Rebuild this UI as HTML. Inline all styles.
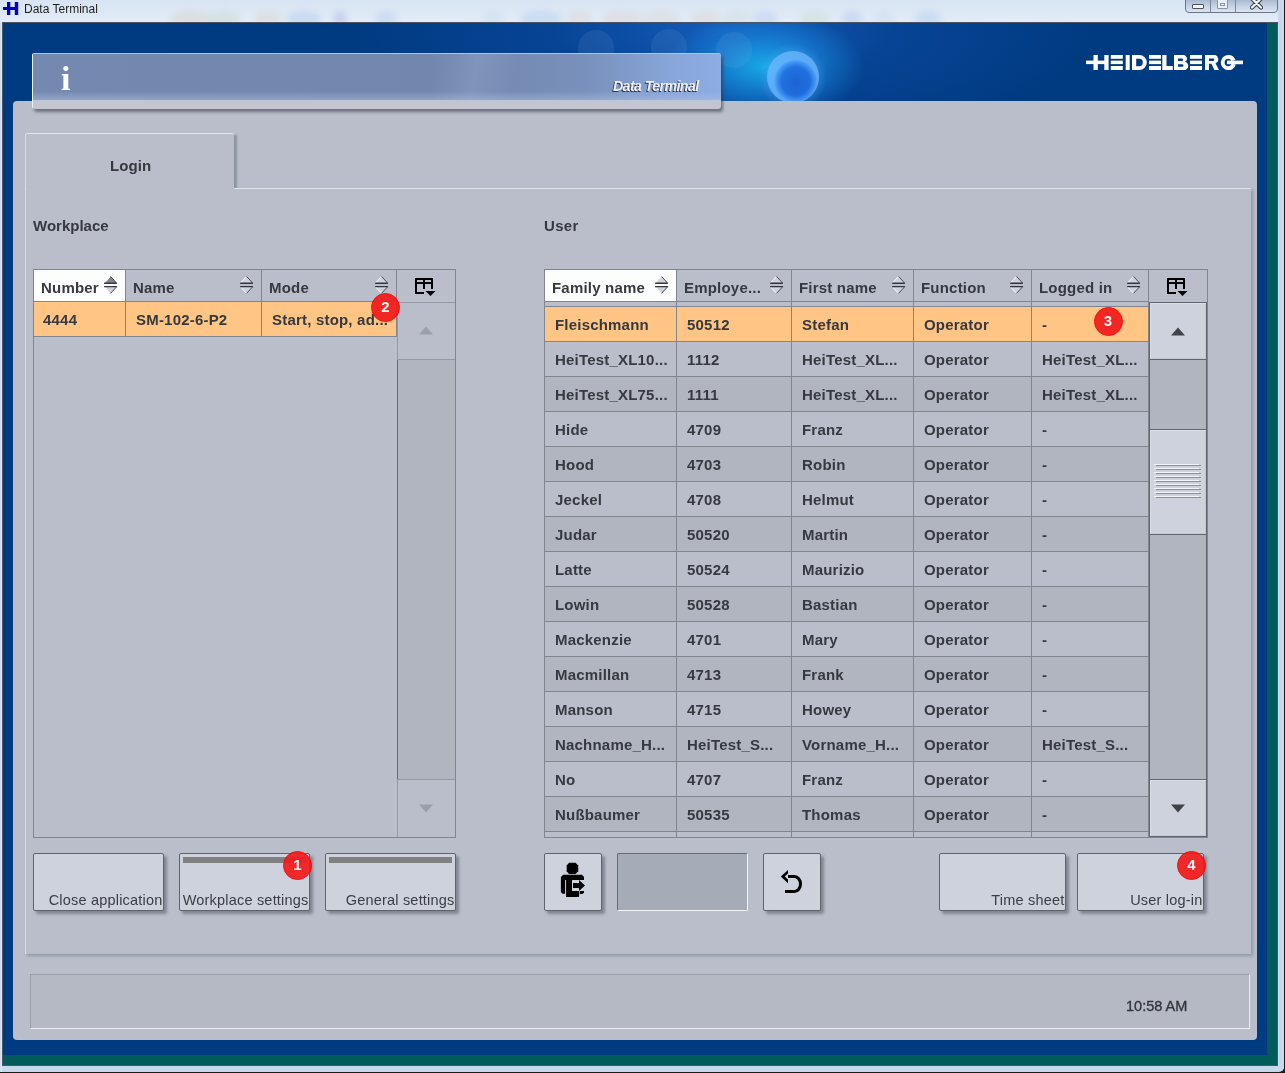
<!DOCTYPE html><html><head><meta charset="utf-8"><style>
*{margin:0;padding:0;box-sizing:border-box}
html,body{width:1285px;height:1073px;overflow:hidden}
body{position:relative;will-change:transform;background:#dde8f5;font-family:"Liberation Sans",sans-serif;color:#36393f}
.a{position:absolute}
.b{font-weight:bold}
.t{position:absolute;white-space:nowrap;font-weight:bold;font-size:15px;line-height:20px;letter-spacing:0.2px}
.hl{position:absolute;height:1px;background:#80858f}
.vl{position:absolute;width:1px;background:#80858f}
.badge{position:absolute;width:29px;height:29px;border-radius:50%;background:#f21c1c;border:1.5px solid #ff0000;opacity:.93;color:#fff;font-size:15px;font-weight:bold;text-align:center;line-height:26px}
.btn{position:absolute;background:#cdd2dc;border:1px solid #5f636b;border-radius:2px;box-shadow:3px 3px 3px rgba(60,65,80,.45)}
.btxt{position:absolute;right:0.5px;bottom:1px;font-size:14.5px;letter-spacing:0.2px;line-height:18px;color:#3a3d44;white-space:nowrap}
</style></head><body>
<div class="a" style="left:0;top:0;width:1285px;height:22px;background:linear-gradient(#d8e4f3,#e3ecf7)"></div>
<div class="a" style="left:0;top:0;width:1285px;height:22px;overflow:hidden"><div class="a" style="left:170px;top:11px;width:40px;height:16px;border-radius:50%;background:rgba(200,170,130,.18);filter:blur(3px)"></div><div class="a" style="left:207px;top:11px;width:34px;height:16px;border-radius:50%;background:rgba(160,190,150,.18);filter:blur(3px)"></div><div class="a" style="left:254px;top:11px;width:28px;height:16px;border-radius:50%;background:rgba(210,170,130,.16);filter:blur(3px)"></div><div class="a" style="left:287px;top:11px;width:34px;height:16px;border-radius:50%;background:rgba(120,170,230,.22);filter:blur(3px)"></div><div class="a" style="left:333px;top:11px;width:14px;height:16px;border-radius:50%;background:rgba(120,110,220,.2);filter:blur(3px)"></div><div class="a" style="left:375px;top:11px;width:22px;height:16px;border-radius:50%;background:rgba(110,160,230,.18);filter:blur(3px)"></div><div class="a" style="left:483px;top:11px;width:20px;height:16px;border-radius:50%;background:rgba(150,190,220,.15);filter:blur(3px)"></div><div class="a" style="left:520px;top:11px;width:42px;height:16px;border-radius:50%;background:rgba(110,170,230,.2);filter:blur(3px)"></div><div class="a" style="left:567px;top:11px;width:24px;height:16px;border-radius:50%;background:rgba(210,170,130,.15);filter:blur(3px)"></div><div class="a" style="left:602px;top:11px;width:40px;height:16px;border-radius:50%;background:rgba(210,170,140,.16);filter:blur(3px)"></div><div class="a" style="left:642px;top:11px;width:38px;height:16px;border-radius:50%;background:rgba(200,180,150,.14);filter:blur(3px)"></div><div class="a" style="left:692px;top:11px;width:28px;height:16px;border-radius:50%;background:rgba(210,170,130,.14);filter:blur(3px)"></div><div class="a" style="left:722px;top:11px;width:30px;height:16px;border-radius:50%;background:rgba(170,190,160,.14);filter:blur(3px)"></div><div class="a" style="left:753px;top:11px;width:24px;height:16px;border-radius:50%;background:rgba(110,160,230,.18);filter:blur(3px)"></div><div class="a" style="left:800px;top:11px;width:30px;height:16px;border-radius:50%;background:rgba(170,190,140,.16);filter:blur(3px)"></div><div class="a" style="left:842px;top:11px;width:20px;height:16px;border-radius:50%;background:rgba(120,150,230,.2);filter:blur(3px)"></div><div class="a" style="left:874px;top:11px;width:20px;height:16px;border-radius:50%;background:rgba(160,180,220,.14);filter:blur(3px)"></div><div class="a" style="left:915px;top:11px;width:26px;height:16px;border-radius:50%;background:rgba(110,170,230,.2);filter:blur(3px)"></div></div>
<svg class="a" style="left:3px;top:2px" width="16" height="14" viewBox="0 0 16 14"><path d="M4 0h3.3v5h4.5V0h3.4v13h-3.4V8H7.3v5H4V8H0V5h4z" fill="#0000c0"/></svg>
<div class="a" style="left:24px;top:2px;font-size:12px;line-height:15px;color:#1e1e1e">Data Terminal</div>
<div class="a" style="left:1185px;top:-2px;width:93px;height:15px;border:1px solid #6c7686;border-radius:0 0 4px 4px;background:linear-gradient(#a6b6cf,#c6d2e4 55%,#dbe4f0)"></div>
<div class="vl" style="left:1210px;top:0;height:12px;background:#7c8696"></div>
<div class="vl" style="left:1235px;top:0;height:12px;background:#7c8696"></div>
<div class="a" style="left:1192px;top:4px;width:12px;height:5px;border:1px solid #4a5260;border-radius:1px;background:#f4f6fa"></div>
<div class="a" style="left:1217px;top:-1px;width:11px;height:10px;border:1px solid #8a94a4;border-radius:1px;background:#e8eef6"></div>
<div class="a" style="left:1220px;top:3px;width:5px;height:3px;border:1px solid #8a94a4"></div>
<svg class="a" style="left:1250px;top:-3px" width="13" height="13" viewBox="0 0 13 13"><path d="M2 1.5L11 10.5M11 1.5L2 10.5" stroke="#3c4450" stroke-width="4.4" stroke-linecap="round"/><path d="M2 1.5L11 10.5M11 1.5L2 10.5" stroke="#f4f6fa" stroke-width="2.2" stroke-linecap="round"/></svg>
<div class="a" style="left:0;top:1072px;width:1285px;height:1px;background:#1a1a1a"></div>
<div class="a" style="left:1278px;top:1066px;width:7px;height:7px;background:#1a1a1a"></div>
<div class="a" style="left:1284px;top:0;width:1px;height:1073px;background:#1a1a1a"></div>
<div class="a" style="left:-6px;top:-10px;width:1290px;height:1082px;border-radius:0 0 5px 5px;border:6px solid #dfe9f5;border-top:0;border-right-color:#c9d9ec;border-bottom-color:#c8d8ec"></div>
<div class="a" style="left:0;top:22px;width:2px;height:1050px;background:linear-gradient(90deg,#c6d6ea,#e8f0f8)"></div>
<div class="a" style="left:2px;top:22px;width:1276px;height:1044px;background:#4b5563"></div>
<div class="a" style="left:3px;top:23px;width:1274px;height:1042px;background:#003a80"></div>
<div class="a" style="left:3px;top:23px;width:1264px;height:78px;overflow:hidden"><div class="a" style="left:340px;top:-113px;width:760px;height:240px;background:radial-gradient(closest-side,rgba(25,100,200,.8) 0,rgba(15,80,175,.45) 45%,rgba(0,58,128,0) 100%)"></div><div class="a" style="left:662px;top:-12px;width:200px;height:110px;background:radial-gradient(closest-side,rgba(25,180,240,.9) 0,rgba(25,145,228,.6) 50%,rgba(0,0,0,0) 100%)"></div><div class="a" style="left:756px;top:20px;width:68px;height:68px;border-radius:50%;background:radial-gradient(closest-side,rgba(110,170,255,.3) 0,rgba(110,170,255,.2) 75%,rgba(110,170,255,0) 100%)"></div><div class="a" style="left:764px;top:28px;width:52px;height:52px;border-radius:50%;background:radial-gradient(circle closest-side at 55% 58%,rgba(25,90,210,.8) 0,rgba(30,105,225,.78) 65%,rgba(70,150,250,.85) 88%,rgba(110,185,255,.75) 100%)"></div><div class="a" style="left:575px;top:7px;width:36px;height:36px;border-radius:50%;background:rgba(170,200,240,.1)"></div><div class="a" style="left:648px;top:6px;width:36px;height:36px;border-radius:50%;background:rgba(170,200,240,.1)"></div><div class="a" style="left:713px;top:9px;width:36px;height:36px;border-radius:50%;background:rgba(170,200,240,.1)"></div></div>
<div class="a" style="left:1267px;top:23px;width:10px;height:1042px;background:#005b5a"></div>
<div class="a" style="left:3px;top:1055px;width:1274px;height:10px;background:#005b5a"></div>
<svg class="a" style="left:1086px;top:55px" width="157" height="15" viewBox="0 0 157 15" fill="#fff"><rect x="0" y="5.6" width="22" height="3.5"/><rect x="7.5" y="0" width="4.3" height="15"/><rect x="18.3" y="0" width="4.3" height="15"/><rect x="24.8" y="0" width="12" height="3.8"/><rect x="24.8" y="5.6" width="12" height="3.5"/><rect x="24.8" y="11" width="12" height="4"/><rect x="39.7" y="0" width="4" height="15"/><path d="M46 0h7.5a7.3 7.5 0 0 1 0 15H46zM50.2 3.8v7.4h3.1a3.5 3.7 0 0 0 0-7.4z" fill-rule="evenodd"/><rect x="63" y="0" width="12" height="3.8"/><rect x="63" y="5.6" width="12" height="3.5"/><rect x="63" y="11" width="12" height="4"/><path d="M76.3 0h4.2v11h6.3v4H76.3z"/><path d="M88 0h8.5a3.9 3.7 0 0 1 2.6 6.8a4 4 0 0 1-2.2 8.2H88zM92 3.4v2.6h3.8a1.3 1.3 0 0 0 0-2.6zM92 9.2v2.6h4.2a1.3 1.3 0 0 0 0-2.6z" fill-rule="evenodd"/><rect x="104" y="0" width="12" height="3.8"/><rect x="104" y="5.6" width="12" height="3.5"/><rect x="104" y="11" width="12" height="4"/><path d="M119 0h8.5a4.2 4.3 0 0 1 2 8.3l3.5 6.7h-4.6l-3-6.2H123V15h-4zM123 3.6v2.4h4a1.2 1.2 0 0 0 0-2.4z" fill-rule="evenodd"/><path d="M142.3 0a7.6 7.6 0 0 1 7.2 5l-4.1 .9a3.6 3.6 0 0 0-3.1-2.1a3.7 3.7 0 0 0 0 7.4a3.6 3.6 0 0 0 3.4-2.5l4.1 .8A7.6 7.6 0 1 1 142.3 0z"/><rect x="141" y="5.6" width="16" height="3.6"/></svg>
<div class="a" style="left:13px;top:101px;width:1244px;height:939px;background:#b9beca;border-radius:4px"></div>
<div class="a" style="left:32px;top:53px;width:689px;height:56px;border-radius:3px;box-shadow:2px 3px 3px rgba(50,55,70,.55);overflow:hidden;background:#c3c6d1"><div class="a" style="left:0;top:0;width:689px;height:47px;background:linear-gradient(100deg,rgba(0,0,0,0) 58%,rgba(190,215,255,.16) 64%,rgba(0,0,0,0) 70%),linear-gradient(90deg,#7489b0 0,#7287ad 62%,#7890bb 80%,#88a6da 93%,#8cace3 100%)"></div><div class="a" style="left:0;top:38px;width:689px;height:10px;background:linear-gradient(rgba(255,255,255,0),rgba(180,195,225,.5))"></div><div class="a" style="left:0;top:0;width:689px;height:1px;background:#b8c4dc"></div><div class="a" style="left:0;top:0;width:1px;height:56px;background:#eef2f8"></div></div>
<div class="a" style="left:61px;top:57px;font-family:'Liberation Serif',serif;font-weight:bold;font-size:34px;line-height:44px;color:#fff">i</div>
<div class="a" style="left:613px;top:77px;font-size:14px;line-height:18px;font-weight:bold;font-style:italic;color:#eef0f6;letter-spacing:-0.5px;text-shadow:-1px 1px 0 #2e3344">Data Terminal</div>
<div class="a" style="left:25px;top:133px;width:209px;height:56px;background:#b9beca;border-top:1px solid #e1e5ec;border-left:1px solid #d8dce4;box-shadow:4px 1px 2px -1px #8c94a1;border-radius:2px 2px 0 0"></div>
<div class="t" style="left:110px;top:156px;letter-spacing:0.1px">Login</div>
<div class="a" style="left:25px;top:188px;width:1226px;height:766px;background:#b9beca;border-top:1px solid #e1e5ec;border-left:1px solid #d8dce4;box-shadow:2px 2px 3px #9098a6"></div>
<div class="a" style="left:26px;top:188px;width:208px;height:2px;background:#b9beca"></div>
<div class="t" style="left:33px;top:216px;letter-spacing:0px">Workplace</div>
<div class="t" style="left:544px;top:216px;letter-spacing:0.3px">User</div>
<div class="a" style="left:33px;top:269px;width:423px;height:569px;background:#b9beca;border:1px solid #80858f"></div>
<div class="a" style="left:34px;top:270px;width:91px;height:31px;background:#fcfdfd"></div>
<div class="a" style="left:34px;top:302px;width:362px;height:34px;background:#ffc584"></div>
<div class="hl" style="left:34px;top:301px;width:362px"></div>
<div class="hl" style="left:34px;top:336px;width:362px"></div>
<div class="vl" style="left:125px;top:270px;height:66px"></div>
<div class="vl" style="left:261px;top:270px;height:66px"></div>
<div class="vl" style="left:396px;top:270px;height:67px"></div>
<div class="t" style="left:41px;top:278px">Number</div>
<div class="t" style="left:133px;top:278px">Name</div>
<div class="t" style="left:269px;top:278px">Mode</div>
<svg class="a" style="left:104px;top:276px" width="14" height="19" viewBox="0 0 14 19"><path d="M6.5 0.4L12.8 7.2H0.2z" fill="#80848c"/><path d="M0.4 7L6.5 0.4" stroke="#fff" stroke-width="0.9"/><path d="M6.5 0.4L12.6 7" stroke="#3c4048" stroke-width="0.9"/><rect x="0" y="6.6" width="13" height="1.3" rx=".6" fill="#33363e"/><path d="M0.2 10.6H12.8L6.5 17.6z" fill="#cdd2dc"/><path d="M0.4 10.8L6.5 17.4" stroke="#fff" stroke-width="0.9"/><path d="M12.6 10.8L6.5 17.4" stroke="#3c4048" stroke-width="0.9"/><rect x="0" y="10" width="13" height="1.3" rx=".6" fill="#33363e"/></svg>
<svg class="a" style="left:240px;top:276px" width="14" height="19" viewBox="0 0 14 19"><path d="M6.5 0.4L12.8 7.2H0.2z" fill="#cdd2dc"/><path d="M0.4 7L6.5 0.4" stroke="#fff" stroke-width="0.9"/><path d="M6.5 0.4L12.6 7" stroke="#3c4048" stroke-width="0.9"/><rect x="0" y="6.6" width="13" height="1.3" rx=".6" fill="#33363e"/><path d="M0.2 10.6H12.8L6.5 17.6z" fill="#cdd2dc"/><path d="M0.4 10.8L6.5 17.4" stroke="#fff" stroke-width="0.9"/><path d="M12.6 10.8L6.5 17.4" stroke="#3c4048" stroke-width="0.9"/><rect x="0" y="10" width="13" height="1.3" rx=".6" fill="#33363e"/></svg>
<svg class="a" style="left:375px;top:276px" width="14" height="19" viewBox="0 0 14 19"><path d="M6.5 0.4L12.8 7.2H0.2z" fill="#cdd2dc"/><path d="M0.4 7L6.5 0.4" stroke="#fff" stroke-width="0.9"/><path d="M6.5 0.4L12.6 7" stroke="#3c4048" stroke-width="0.9"/><rect x="0" y="6.6" width="13" height="1.3" rx=".6" fill="#33363e"/><path d="M0.2 10.6H12.8L6.5 17.6z" fill="#cdd2dc"/><path d="M0.4 10.8L6.5 17.4" stroke="#fff" stroke-width="0.9"/><path d="M12.6 10.8L6.5 17.4" stroke="#3c4048" stroke-width="0.9"/><rect x="0" y="10" width="13" height="1.3" rx=".6" fill="#33363e"/></svg>
<div class="t" style="left:43px;top:310px">4444</div>
<div class="t" style="left:136px;top:310px">SM-102-6-P2</div>
<div class="t" style="left:272px;top:310px">Start, stop, ad...</div>
<svg class="a" style="left:415px;top:278px" width="21" height="19" viewBox="0 0 21 19" fill="#000"><rect x="0" y="0" width="18" height="2"/><rect x="0" y="4" width="18" height="2"/><rect x="0" y="0" width="2" height="16"/><rect x="0" y="14" width="9" height="2"/><rect x="8" y="0" width="2" height="11"/><rect x="16" y="0" width="2" height="11"/><path d="M10.5 13h10l-5 5z"/></svg>
<div class="a" style="left:397px;top:302px;width:58px;height:535px;background:#b0b5c0;border-left:1px solid #646b76"></div>
<div class="a" style="left:397px;top:302px;width:58px;height:58px;background:#b9beca;border:1px solid #9298a4;border-right:0"></div>
<div class="a" style="left:397px;top:779px;width:58px;height:58px;background:#b9beca;border:1px solid #9298a4;border-right:0;border-bottom:0"></div>
<svg class="a" style="left:418px;top:326px" width="16" height="9"><path d="M8 0.5L15 8.5H1z" fill="#9a9fab"/></svg>
<svg class="a" style="left:418px;top:804px" width="16" height="9"><path d="M1 0.5H15L8 8.5z" fill="#9a9fab"/></svg>
<div class="badge" style="left:371px;top:293px">2</div>
<div class="a" style="left:544px;top:269px;width:664px;height:569px;background:#b9beca;border:1px solid #80858f"></div>
<div class="a" style="left:545px;top:270px;width:131px;height:31px;background:#fcfdfd"></div>
<div class="a" style="left:545px;top:307px;width:603px;height:34px;background:#ffc584"></div>
<div class="a" style="left:545px;top:342px;width:603px;height:34px;background:#b9beca"></div>
<div class="a" style="left:545px;top:377px;width:603px;height:34px;background:#b0b5c0"></div>
<div class="a" style="left:545px;top:412px;width:603px;height:34px;background:#b9beca"></div>
<div class="a" style="left:545px;top:447px;width:603px;height:34px;background:#b0b5c0"></div>
<div class="a" style="left:545px;top:482px;width:603px;height:34px;background:#b9beca"></div>
<div class="a" style="left:545px;top:517px;width:603px;height:34px;background:#b0b5c0"></div>
<div class="a" style="left:545px;top:552px;width:603px;height:34px;background:#b9beca"></div>
<div class="a" style="left:545px;top:587px;width:603px;height:34px;background:#b0b5c0"></div>
<div class="a" style="left:545px;top:622px;width:603px;height:34px;background:#b9beca"></div>
<div class="a" style="left:545px;top:657px;width:603px;height:34px;background:#b0b5c0"></div>
<div class="a" style="left:545px;top:692px;width:603px;height:34px;background:#b9beca"></div>
<div class="a" style="left:545px;top:727px;width:603px;height:34px;background:#b0b5c0"></div>
<div class="a" style="left:545px;top:762px;width:603px;height:34px;background:#b9beca"></div>
<div class="a" style="left:545px;top:797px;width:603px;height:34px;background:#b0b5c0"></div>
<div class="a" style="left:545px;top:832px;width:603px;height:5px;background:#b9beca"></div>
<div class="hl" style="left:545px;top:301px;width:603px"></div>
<div class="hl" style="left:545px;top:306px;width:603px"></div>
<div class="hl" style="left:545px;top:341px;width:603px"></div>
<div class="hl" style="left:545px;top:376px;width:603px"></div>
<div class="hl" style="left:545px;top:411px;width:603px"></div>
<div class="hl" style="left:545px;top:446px;width:603px"></div>
<div class="hl" style="left:545px;top:481px;width:603px"></div>
<div class="hl" style="left:545px;top:516px;width:603px"></div>
<div class="hl" style="left:545px;top:551px;width:603px"></div>
<div class="hl" style="left:545px;top:586px;width:603px"></div>
<div class="hl" style="left:545px;top:621px;width:603px"></div>
<div class="hl" style="left:545px;top:656px;width:603px"></div>
<div class="hl" style="left:545px;top:691px;width:603px"></div>
<div class="hl" style="left:545px;top:726px;width:603px"></div>
<div class="hl" style="left:545px;top:761px;width:603px"></div>
<div class="hl" style="left:545px;top:796px;width:603px"></div>
<div class="hl" style="left:545px;top:831px;width:603px"></div>
<div class="vl" style="left:676px;top:270px;height:567px"></div>
<div class="vl" style="left:791px;top:270px;height:567px"></div>
<div class="vl" style="left:913px;top:270px;height:567px"></div>
<div class="vl" style="left:1031px;top:270px;height:567px"></div>
<div class="vl" style="left:1148px;top:270px;height:567px"></div>
<div class="t" style="left:552px;top:278px">Family name</div>
<div class="t" style="left:684px;top:278px">Employe...</div>
<div class="t" style="left:799px;top:278px">First name</div>
<div class="t" style="left:921px;top:278px">Function</div>
<div class="t" style="left:1039px;top:278px">Logged in</div>
<svg class="a" style="left:655px;top:276px" width="14" height="19" viewBox="0 0 14 19"><path d="M6.5 0.4L12.8 7.2H0.2z" fill="#cdd2dc"/><path d="M0.4 7L6.5 0.4" stroke="#fff" stroke-width="0.9"/><path d="M6.5 0.4L12.6 7" stroke="#3c4048" stroke-width="0.9"/><rect x="0" y="6.6" width="13" height="1.3" rx=".6" fill="#33363e"/><path d="M0.2 10.6H12.8L6.5 17.6z" fill="#cdd2dc"/><path d="M0.4 10.8L6.5 17.4" stroke="#fff" stroke-width="0.9"/><path d="M12.6 10.8L6.5 17.4" stroke="#3c4048" stroke-width="0.9"/><rect x="0" y="10" width="13" height="1.3" rx=".6" fill="#33363e"/></svg>
<svg class="a" style="left:770px;top:276px" width="14" height="19" viewBox="0 0 14 19"><path d="M6.5 0.4L12.8 7.2H0.2z" fill="#cdd2dc"/><path d="M0.4 7L6.5 0.4" stroke="#fff" stroke-width="0.9"/><path d="M6.5 0.4L12.6 7" stroke="#3c4048" stroke-width="0.9"/><rect x="0" y="6.6" width="13" height="1.3" rx=".6" fill="#33363e"/><path d="M0.2 10.6H12.8L6.5 17.6z" fill="#cdd2dc"/><path d="M0.4 10.8L6.5 17.4" stroke="#fff" stroke-width="0.9"/><path d="M12.6 10.8L6.5 17.4" stroke="#3c4048" stroke-width="0.9"/><rect x="0" y="10" width="13" height="1.3" rx=".6" fill="#33363e"/></svg>
<svg class="a" style="left:892px;top:276px" width="14" height="19" viewBox="0 0 14 19"><path d="M6.5 0.4L12.8 7.2H0.2z" fill="#cdd2dc"/><path d="M0.4 7L6.5 0.4" stroke="#fff" stroke-width="0.9"/><path d="M6.5 0.4L12.6 7" stroke="#3c4048" stroke-width="0.9"/><rect x="0" y="6.6" width="13" height="1.3" rx=".6" fill="#33363e"/><path d="M0.2 10.6H12.8L6.5 17.6z" fill="#cdd2dc"/><path d="M0.4 10.8L6.5 17.4" stroke="#fff" stroke-width="0.9"/><path d="M12.6 10.8L6.5 17.4" stroke="#3c4048" stroke-width="0.9"/><rect x="0" y="10" width="13" height="1.3" rx=".6" fill="#33363e"/></svg>
<svg class="a" style="left:1010px;top:276px" width="14" height="19" viewBox="0 0 14 19"><path d="M6.5 0.4L12.8 7.2H0.2z" fill="#cdd2dc"/><path d="M0.4 7L6.5 0.4" stroke="#fff" stroke-width="0.9"/><path d="M6.5 0.4L12.6 7" stroke="#3c4048" stroke-width="0.9"/><rect x="0" y="6.6" width="13" height="1.3" rx=".6" fill="#33363e"/><path d="M0.2 10.6H12.8L6.5 17.6z" fill="#cdd2dc"/><path d="M0.4 10.8L6.5 17.4" stroke="#fff" stroke-width="0.9"/><path d="M12.6 10.8L6.5 17.4" stroke="#3c4048" stroke-width="0.9"/><rect x="0" y="10" width="13" height="1.3" rx=".6" fill="#33363e"/></svg>
<svg class="a" style="left:1127px;top:276px" width="14" height="19" viewBox="0 0 14 19"><path d="M6.5 0.4L12.8 7.2H0.2z" fill="#cdd2dc"/><path d="M0.4 7L6.5 0.4" stroke="#fff" stroke-width="0.9"/><path d="M6.5 0.4L12.6 7" stroke="#3c4048" stroke-width="0.9"/><rect x="0" y="6.6" width="13" height="1.3" rx=".6" fill="#33363e"/><path d="M0.2 10.6H12.8L6.5 17.6z" fill="#cdd2dc"/><path d="M0.4 10.8L6.5 17.4" stroke="#fff" stroke-width="0.9"/><path d="M12.6 10.8L6.5 17.4" stroke="#3c4048" stroke-width="0.9"/><rect x="0" y="10" width="13" height="1.3" rx=".6" fill="#33363e"/></svg>
<svg class="a" style="left:1167px;top:278px" width="21" height="19" viewBox="0 0 21 19" fill="#000"><rect x="0" y="0" width="18" height="2"/><rect x="0" y="4" width="18" height="2"/><rect x="0" y="0" width="2" height="16"/><rect x="0" y="14" width="9" height="2"/><rect x="8" y="0" width="2" height="11"/><rect x="16" y="0" width="2" height="11"/><path d="M10.5 13h10l-5 5z"/></svg>
<div class="t" style="left:555px;top:315px">Fleischmann</div>
<div class="t" style="left:687px;top:315px">50512</div>
<div class="t" style="left:802px;top:315px">Stefan</div>
<div class="t" style="left:924px;top:315px">Operator</div>
<div class="t" style="left:1042px;top:315px">-</div>
<div class="t" style="left:555px;top:350px">HeiTest_XL10...</div>
<div class="t" style="left:687px;top:350px">1112</div>
<div class="t" style="left:802px;top:350px">HeiTest_XL...</div>
<div class="t" style="left:924px;top:350px">Operator</div>
<div class="t" style="left:1042px;top:350px">HeiTest_XL...</div>
<div class="t" style="left:555px;top:385px">HeiTest_XL75...</div>
<div class="t" style="left:687px;top:385px">1111</div>
<div class="t" style="left:802px;top:385px">HeiTest_XL...</div>
<div class="t" style="left:924px;top:385px">Operator</div>
<div class="t" style="left:1042px;top:385px">HeiTest_XL...</div>
<div class="t" style="left:555px;top:420px">Hide</div>
<div class="t" style="left:687px;top:420px">4709</div>
<div class="t" style="left:802px;top:420px">Franz</div>
<div class="t" style="left:924px;top:420px">Operator</div>
<div class="t" style="left:1042px;top:420px">-</div>
<div class="t" style="left:555px;top:455px">Hood</div>
<div class="t" style="left:687px;top:455px">4703</div>
<div class="t" style="left:802px;top:455px">Robin</div>
<div class="t" style="left:924px;top:455px">Operator</div>
<div class="t" style="left:1042px;top:455px">-</div>
<div class="t" style="left:555px;top:490px">Jeckel</div>
<div class="t" style="left:687px;top:490px">4708</div>
<div class="t" style="left:802px;top:490px">Helmut</div>
<div class="t" style="left:924px;top:490px">Operator</div>
<div class="t" style="left:1042px;top:490px">-</div>
<div class="t" style="left:555px;top:525px">Judar</div>
<div class="t" style="left:687px;top:525px">50520</div>
<div class="t" style="left:802px;top:525px">Martin</div>
<div class="t" style="left:924px;top:525px">Operator</div>
<div class="t" style="left:1042px;top:525px">-</div>
<div class="t" style="left:555px;top:560px">Latte</div>
<div class="t" style="left:687px;top:560px">50524</div>
<div class="t" style="left:802px;top:560px">Maurizio</div>
<div class="t" style="left:924px;top:560px">Operator</div>
<div class="t" style="left:1042px;top:560px">-</div>
<div class="t" style="left:555px;top:595px">Lowin</div>
<div class="t" style="left:687px;top:595px">50528</div>
<div class="t" style="left:802px;top:595px">Bastian</div>
<div class="t" style="left:924px;top:595px">Operator</div>
<div class="t" style="left:1042px;top:595px">-</div>
<div class="t" style="left:555px;top:630px">Mackenzie</div>
<div class="t" style="left:687px;top:630px">4701</div>
<div class="t" style="left:802px;top:630px">Mary</div>
<div class="t" style="left:924px;top:630px">Operator</div>
<div class="t" style="left:1042px;top:630px">-</div>
<div class="t" style="left:555px;top:665px">Macmillan</div>
<div class="t" style="left:687px;top:665px">4713</div>
<div class="t" style="left:802px;top:665px">Frank</div>
<div class="t" style="left:924px;top:665px">Operator</div>
<div class="t" style="left:1042px;top:665px">-</div>
<div class="t" style="left:555px;top:700px">Manson</div>
<div class="t" style="left:687px;top:700px">4715</div>
<div class="t" style="left:802px;top:700px">Howey</div>
<div class="t" style="left:924px;top:700px">Operator</div>
<div class="t" style="left:1042px;top:700px">-</div>
<div class="t" style="left:555px;top:735px">Nachname_H...</div>
<div class="t" style="left:687px;top:735px">HeiTest_S...</div>
<div class="t" style="left:802px;top:735px">Vorname_H...</div>
<div class="t" style="left:924px;top:735px">Operator</div>
<div class="t" style="left:1042px;top:735px">HeiTest_S...</div>
<div class="t" style="left:555px;top:770px">No</div>
<div class="t" style="left:687px;top:770px">4707</div>
<div class="t" style="left:802px;top:770px">Franz</div>
<div class="t" style="left:924px;top:770px">Operator</div>
<div class="t" style="left:1042px;top:770px">-</div>
<div class="t" style="left:555px;top:805px">Nußbaumer</div>
<div class="t" style="left:687px;top:805px">50535</div>
<div class="t" style="left:802px;top:805px">Thomas</div>
<div class="t" style="left:924px;top:805px">Operator</div>
<div class="t" style="left:1042px;top:805px">-</div>
<div class="a" style="left:1149px;top:302px;width:58px;height:535px;background:#b0b5c0;border-left:1px solid #5f6670;border-right:1px solid #5f6670"></div>
<div class="a" style="left:1149px;top:302px;width:58px;height:58px;background:#cdd2dc;border:1px solid #5f6670;box-shadow:inset 1px 1px 0 #d9dee7,inset -1px -1px 0 #c3c8d2"></div>
<div class="a" style="left:1149px;top:429px;width:58px;height:106px;background:#cdd2dc;border:1px solid #5f6670;box-shadow:inset 1px 1px 0 #d9dee7,inset -1px -1px 0 #c3c8d2"></div>
<div class="a" style="left:1149px;top:779px;width:58px;height:58px;background:#cdd2dc;border:1px solid #5f6670;box-shadow:inset 1px 1px 0 #d9dee7,inset -1px -1px 0 #c3c8d2"></div>
<svg class="a" style="left:1170px;top:327px" width="16" height="9"><path d="M8 0.5L15 8.5H1z" fill="#404248"/></svg>
<svg class="a" style="left:1170px;top:804px" width="16" height="9"><path d="M1 0.5H15L8 8.5z" fill="#404248"/></svg>
<div class="a" style="left:1154px;top:464px;width:47px;height:36px"><div class="a" style="left:0;top:0px;width:45px;height:1px;background:#f2f4f8"></div><div class="a" style="left:2px;top:1px;width:45px;height:1px;background:#8a909a"></div><div class="a" style="left:0;top:4px;width:45px;height:1px;background:#f2f4f8"></div><div class="a" style="left:2px;top:5px;width:45px;height:1px;background:#8a909a"></div><div class="a" style="left:0;top:8px;width:45px;height:1px;background:#f2f4f8"></div><div class="a" style="left:2px;top:9px;width:45px;height:1px;background:#8a909a"></div><div class="a" style="left:0;top:12px;width:45px;height:1px;background:#f2f4f8"></div><div class="a" style="left:2px;top:13px;width:45px;height:1px;background:#8a909a"></div><div class="a" style="left:0;top:16px;width:45px;height:1px;background:#f2f4f8"></div><div class="a" style="left:2px;top:17px;width:45px;height:1px;background:#8a909a"></div><div class="a" style="left:0;top:20px;width:45px;height:1px;background:#f2f4f8"></div><div class="a" style="left:2px;top:21px;width:45px;height:1px;background:#8a909a"></div><div class="a" style="left:0;top:24px;width:45px;height:1px;background:#f2f4f8"></div><div class="a" style="left:2px;top:25px;width:45px;height:1px;background:#8a909a"></div><div class="a" style="left:0;top:28px;width:45px;height:1px;background:#f2f4f8"></div><div class="a" style="left:2px;top:29px;width:45px;height:1px;background:#8a909a"></div><div class="a" style="left:0;top:32px;width:45px;height:1px;background:#f2f4f8"></div><div class="a" style="left:2px;top:33px;width:45px;height:1px;background:#8a909a"></div></div>
<div class="badge" style="left:1093.5px;top:306.5px">3</div>
<div class="btn" style="left:33px;top:853px;width:131px;height:58px"><div class="btxt">Close application</div></div>
<div class="btn" style="left:179px;top:853px;width:131px;height:58px"><div class="a" style="left:3px;top:3px;width:123px;height:6px;background:#808080"></div><div class="btxt">Workplace settings</div></div>
<div class="btn" style="left:325px;top:853px;width:131px;height:58px"><div class="a" style="left:3px;top:3px;width:123px;height:6px;background:#808080"></div><div class="btxt">General settings</div></div>
<div class="badge" style="left:283px;top:851px">1</div>
<div class="btn" style="left:544px;top:853px;width:58px;height:58px"></div>
<div class="btn" style="left:763px;top:853px;width:58px;height:58px"></div>
<div class="btn" style="left:939px;top:853px;width:127px;height:58px"><div class="btxt">Time sheet</div></div>
<div class="btn" style="left:1077px;top:853px;width:127px;height:58px"><div class="btxt">User log-in</div></div>
<div class="badge" style="left:1177px;top:851px">4</div>
<div class="a" style="left:617px;top:853px;width:131px;height:58px;background:#a5abb7;border:1px solid #646a75;border-right-color:#f4f6f8;border-bottom-color:#f4f6f8;border-radius:2px"></div>
<svg class="a" style="left:0;top:0" width="1285" height="1073" viewBox="0 0 1285 1073"><g fill="#000"><path d="M569 862.7h6.5l2.7 2.8v5.8l-2.7 2.8H569l-2.3-2.8v-5.8z"/><path d="M563.3 874.7H582l2 2.3V880H560.9v-3z"/><path d="M560.9 880h4.2v13.7h-2.6l-1.6-1.7z"/><path d="M566.1 880H572v11h7.1v5.9h-13z"/><path d="M573 883h6v-3l6 5.5-6 5.5v-3h-6z"/><path d="M579.8 891H584v1.5l-1.5 1.5h-2.7z"/></g><g fill="none" stroke="#000"><path d="M788 876.5H794.5A6 7.5 0 0 1 794.5 891.5H785" stroke-width="3"/></g><path d="M780.8 876.4L788 869.9v3.5l-3.3 3L788 879.4v3.8z" fill="#000"/></svg>
<div class="a" style="left:30px;top:974px;width:1220px;height:55px;background:#b5b9c4;border:1px solid #9a9ea8;border-right-color:#eceef2;border-bottom-color:#eceef2"></div>
<div class="a" style="left:1126px;top:997px;font-size:14.5px;line-height:18px;color:#34363c;-webkit-text-stroke:0.35px #34363c">10:58 AM</div>
</body></html>
